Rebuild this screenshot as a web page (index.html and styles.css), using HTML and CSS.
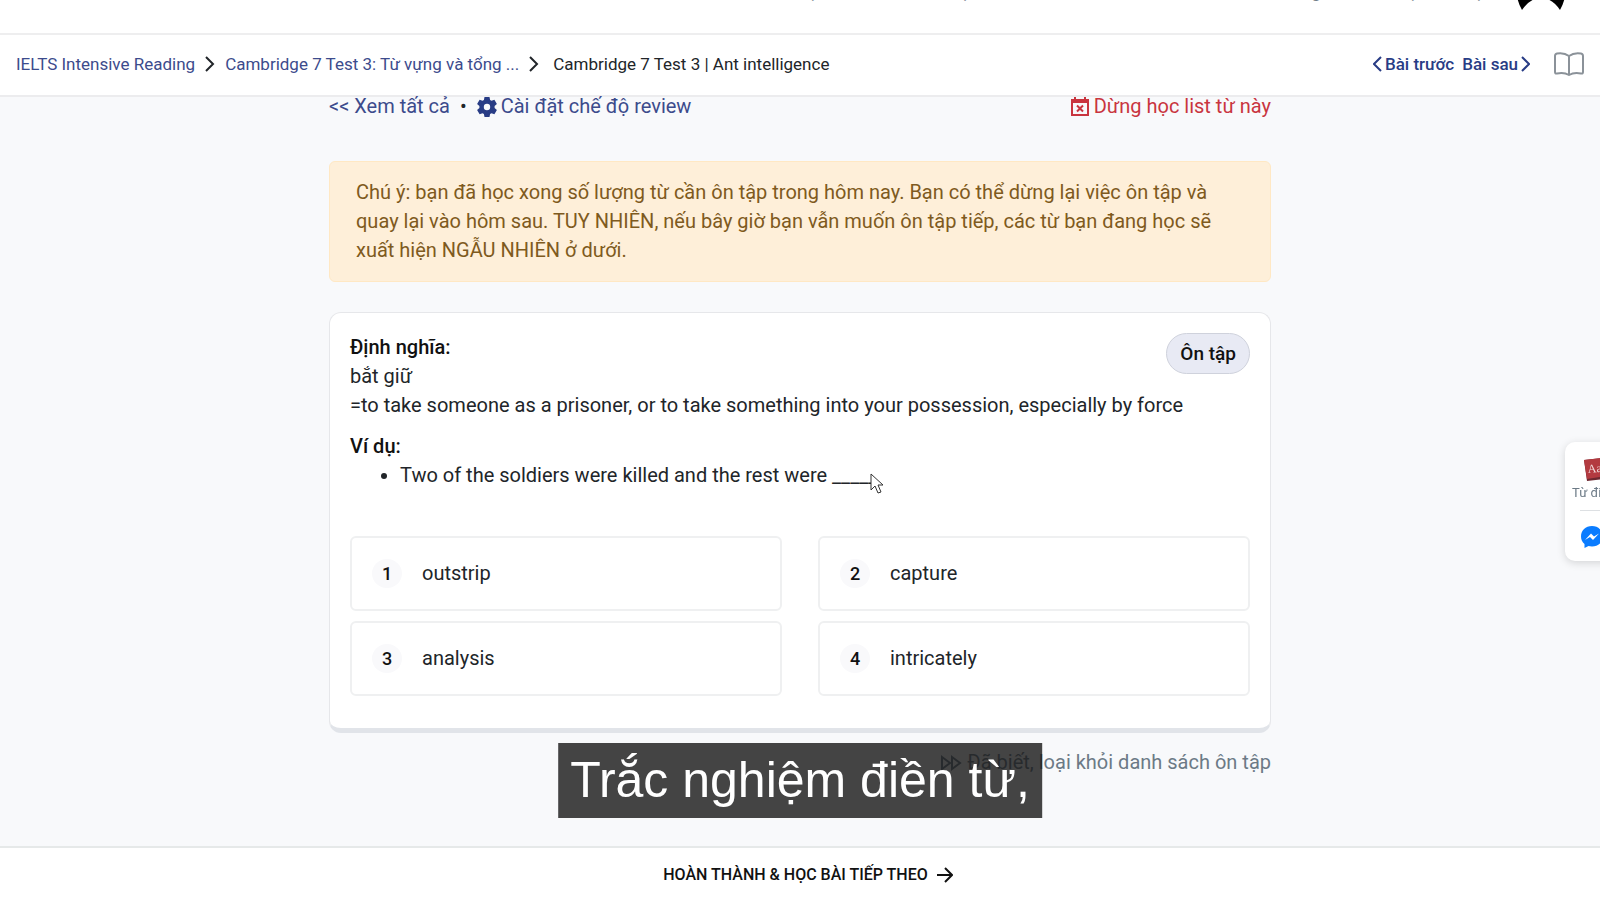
FILE: index.html
```html
<!DOCTYPE html>
<html lang="vi">
<head>
    <meta charset="UTF-8" />
    <meta name="viewport" content="width=device-width, initial-scale=1.0" />
    <title>Cambridge 7 Test 3 | Ant intelligence</title>
    <link rel="stylesheet" href="styles.css">
</head>
<body>
    <header class="site-header">
        <nav class="site-nav">
            <div class="nav-main">
                <a href="#">Khoá học</a>
                <a href="#">Bài học</a>
            </div>
            <div class="nav-user">
                <a href="#">Thông báo</a>
                <a href="#">Đã học</a>
                <a href="#">Từ lạ</a>
            </div>
        </nav>
        <svg class="avatar" viewBox="0 0 50 50" aria-hidden="true">
            <path d="M0 25h50q0 15-6 25-8-12-19-12T6 50Q0 40 0 25z"/>
        </svg>
    </header>

    <div class="topbar">
        <nav class="breadcrumb">
            <a href="#">IELTS Intensive Reading</a>
            <svg class="sep" viewBox="0 0 10 16"><path d="M1 1l7 7-7 7"/></svg>
            <a href="#">Cambridge 7 Test 3: Từ vựng và tổng ...</a>
            <svg class="sep" viewBox="0 0 10 16"><path d="M1 1l7 7-7 7"/></svg>
            <span class="current">Cambridge 7 Test 3 | Ant intelligence</span>
        </nav>
        <div class="lesson-nav">
            <a href="#"><svg class="chevron" viewBox="0 0 9 16"><path d="M8 1L1 8l7 7"/></svg>Bài trước</a>
            <a href="#">Bài sau<svg class="chevron" viewBox="0 0 9 16"><path d="M1 1l7 7-7 7"/></svg></a>
            <button class="book-button" aria-label="Mục lục">
                <svg viewBox="0 0 30 24"><path d="M15 4C11 1 6 1 3 1.500Q1 2 1 4v16q0 2 2 1.500Q10 20 15 23q5-3 12-1.500 2 .5 2-1.500V4q0-2-2-2.500C24 1 19 1 15 4zM15 4v19"/></svg>
            </button>
        </div>
    </div>

    <main class="container">
        <div class="toolbar">
            <div class="toolbar-left">
                <a href="#">&lt;&lt; Xem tất cả</a>
                <span class="dot">•</span>
                <a href="#">
                    <svg class="icon" viewBox="0 0 20 20"><path fill="currentColor" fill-rule="evenodd" d="M7.500 0h5l.6 3 1.400.8 2.900-1 2.500 4.300-2.300 2v1.800l2.300 2-2.500 4.300-2.900-1-1.400.8-.6 3h-5l-.6-3-1.400-.8-2.900 1L.1 12.900l2.300-2V9.100l-2.300-2 2.500-4.300 2.900 1L6.900 3zM10 6.800a3.200 3.200 0 100 6.400 3.200 3.200 0 000-6.400z"/></svg>
                    Cài đặt chế độ review
                </a>
            </div>
            <a class="danger" href="#">
                <svg class="icon" viewBox="0 0 20 20"><path fill="none" stroke="currentColor" stroke-width="2" d="M2 4h16v14H2zM7 8.500l6 6M13 8.500l-6 6"/><path fill="currentColor" d="M1 2h3V0h2v2h8V0h2v2h3v4H1z"/></svg>
                Dừng học list từ này
            </a>
        </div>

        <div class="alert">
            Chú ý: bạn đã học xong số lượng từ cần ôn tập trong hôm nay. Bạn có thể dừng lại việc ôn tập và quay lại vào hôm sau. TUY NHIÊN, nếu bây giờ bạn vẫn muốn ôn tập tiếp, các từ bạn đang học sẽ xuất hiện NGẪU NHIÊN ở dưới.
        </div>

        <section class="card">
            <span class="badge">Ôn tập</span>
            <div class="definition">
                <h3>Định nghĩa:</h3>
                <p>bắt giữ</p>
                <p>=to take someone as a prisoner, or to take something into your possession, especially by force</p>
            </div>
            <h3>Ví dụ:</h3>
            <ul class="examples">
                <li>Two of the soldiers were killed and the rest were <span class="blank">_____<svg class="cursor" viewBox="0 0 14 21"><path d="M1 1v16l4-4 3 7 3-1-3-7h5z"/></svg></span></li>
            </ul>
            <div class="answers">
                <button class="answer"><span class="number">1</span>outstrip</button>
                <button class="answer"><span class="number">2</span>capture</button>
                <button class="answer"><span class="number">3</span>analysis</button>
                <button class="answer"><span class="number">4</span>intricately</button>
            </div>
        </section>

        <a class="known" href="#">
            <svg class="forward" viewBox="0 0 22 16"><path d="M2 2l8 6-8 6zM12 2l8 6-8 6z"/></svg>
            Đã biết, loại khỏi danh sách ôn tập
        </a>
    </main>

    <footer class="footer">
        <button class="finish">
            HOÀN THÀNH &amp; HỌC BÀI TIẾP THEO
            <svg class="arrow" viewBox="0 0 16 16"><path d="M0 8h15M8 1l7 7-7 7"/></svg>
        </button>
    </footer>

    <aside class="side-widget">
        <a href="#">
            <svg class="dictionary" viewBox="0 0 30 24"><path fill="#6d2830" d="M1 3l27-3 2 21-26 3z"/><path fill="#b33a40" d="M1 3l26-3 2 18-25 4z"/><text x="5" y="16" transform="rotate(-5 5 16)">Aa</text></svg>
            Từ điển
        </a>
        <a href="#" aria-label="Messenger">
            <svg class="messenger" viewBox="0 0 24 24"><path fill="#0a7cff" d="M12 1C5.500 1 1 5.500 1 11.500c0 3 1.300 5.500 3.500 7.500V23l4-2c1 .3 2 .5 3.500.5 6.500 0 11-4.500 11-10S18.500 1 12 1z"/><path fill="#fff" d="M5 15l6-6.500 3 3 5-3-6 6.500-3-3z"/></svg>
        </a>
    </aside>

    <div class="caption">Trắc nghiệm điền từ,</div>
</body>
</html>
```
FILE: styles.css
```css
:root {
    --bg: #f8f9fb;
    --border: #e6e7ea;
    --link: #3c4b8c;
    --link-strong: #283c85;
    --danger: #c9353f;
    --muted: #6c7a86;
}

* {
    margin: 0;
    padding: 0;
    box-sizing: border-box;
}

body {
    min-height: 100vh;
    display: flex;
    flex-direction: column;
    font-family: Roboto, sans-serif;
    font-size: 20px;
    line-height: 29px;
    color: #212529;
    background: var(--bg);
    overflow: hidden;
}

a {
    color: var(--link);
    text-decoration: none;
}

button {
    font: inherit;
    color: inherit;
    background: none;
    border: none;
    cursor: pointer;
}

svg {
    flex: none;
}

/* header is scrolled almost out of view */
.site-header {
    height: 35px;
    display: flex;
    align-items: flex-end;
    justify-content: flex-end;
    gap: 32px;
    padding: 0 34px 23px 0;
    background: #fff;
    border-bottom: 2px solid #eeeeef;
}

.site-nav {
    display: flex;
    gap: 294px;
    padding-bottom: 6px;
    font-size: 17px;
    line-height: 24px;
    white-space: nowrap;
}

.nav-main,
.nav-user {
    display: flex;
    gap: 20px;
}

.nav-main {
    gap: 96px;
}

.site-nav a {
    color: var(--muted);
}

.avatar {
    width: 50px;
    height: 50px;
}

.topbar {
    display: flex;
    align-items: center;
    justify-content: space-between;
    height: 62px;
    padding: 0 16px 2px;
    background: #fff;
    border-bottom: 2px solid #ececee;
    font-size: 17px;
}

.breadcrumb,
.lesson-nav,
.lesson-nav a {
    display: flex;
    align-items: center;
}

.breadcrumb {
    gap: 10px;
}

.sep {
    width: 10px;
    height: 16px;
    fill: none;
    stroke: #212529;
    stroke-width: 2;
}

.current {
    margin-left: 4px;
}

.lesson-nav {
    gap: 8px;
}

.lesson-nav a {
    gap: 3px;
    color: var(--link-strong);
    font-weight: 500;
}

.chevron {
    width: 9px;
    height: 16px;
    fill: none;
    stroke: currentColor;
    stroke-width: 2;
}

.book-button {
    display: flex;
    margin-left: 16px;
}

.book-button svg {
    width: 30px;
    height: 24px;
    fill: none;
    stroke: #8b9299;
    stroke-width: 2;
}

.container {
    flex: 1;
    width: 100%;
    max-width: 942px;
    margin: 0 auto;
    display: flex;
    flex-direction: column;
}

.toolbar {
    display: flex;
    justify-content: space-between;
    margin: -5px 0 40px;
}

.toolbar-left {
    display: flex;
    gap: 10px;
}

.dot {
    color: #212529;
}

.toolbar a {
    display: flex;
    align-items: center;
    gap: 4px;
}

.toolbar .icon {
    width: 20px;
    height: 20px;
    color: var(--link-strong);
}

.toolbar .danger,
.toolbar .danger .icon {
    color: var(--danger);
}

.alert {
    padding: 16px 26px;
    border: 1px solid #ffe8c4;
    border-radius: 6px;
    background: #feefd9;
    color: #7e5a20;
}

.card {
    position: relative;
    margin: 30px 0 15px;
    padding: 20px;
    border: 1px solid var(--border);
    border-bottom: 5px solid #e1e4e9;
    border-radius: 12px;
    background: #fff;
}

.card h3 {
    font-size: 20px;
    font-weight: 500;
    color: #111;
}

.definition {
    margin-bottom: 12px;
}

.badge {
    position: absolute;
    top: 20px;
    right: 20px;
    padding: 5px 13px;
    border: 1px solid #cfd2dc;
    border-radius: 21px;
    background: #e8eaf4;
    color: #111;
    font-size: 19px;
    font-weight: 500;
}

.examples {
    padding-left: 50px;
    margin-bottom: 46px;
}

.blank {
    position: relative;
}

/* mouse pointer over the blank */
.cursor {
    position: absolute;
    left: 38px;
    top: 10px;
    width: 14px;
    height: 21px;
    fill: #fff;
    stroke: #333;
}

.answers {
    display: grid;
    grid-template-columns: 1fr 1fr;
    gap: 10px 36px;
    margin-bottom: 12px;
}

.answer {
    display: flex;
    align-items: center;
    gap: 20px;
    padding: 21px 20px;
    border: 2px solid #eff0f1;
    border-radius: 6px;
    text-align: left;
}

.number {
    width: 30px;
    border-radius: 50%;
    background: #f9f9fb;
    color: #111;
    font-size: 18px;
    font-weight: 500;
    text-align: center;
}

.known {
    display: flex;
    align-items: center;
    align-self: flex-end;
    gap: 5px;
    color: var(--muted);
}

.forward {
    width: 22px;
    height: 16px;
    fill: none;
    stroke: currentColor;
    stroke-width: 2;
}

.footer {
    display: flex;
    justify-content: center;
    padding: 12px 0 8px 16px;
    border-top: 2px solid #e6e9e9;
    background: #fff;
}

.finish {
    display: flex;
    align-items: center;
    gap: 9px;
    font-size: 16px;
    line-height: 29px;
    font-weight: 500;
    color: #111;
}

.arrow {
    width: 16px;
    height: 16px;
    fill: none;
    stroke: currentColor;
    stroke-width: 2;
}

.side-widget {
    position: fixed;
    top: 442px;
    right: -20px;
    width: 55px;
    padding: 15px 7px 12px;
    border-radius: 10px;
    background: #fff;
    box-shadow: 0 2px 8px rgba(0, 0, 0, 0.15);
    font-size: 13px;
    line-height: 24px;
    white-space: nowrap;
}

.side-widget a {
    display: flex;
    flex-direction: column;
    color: var(--muted);
}

.side-widget a + a {
    margin: 5px 0 0 8px;
    padding: 14px 0 0;
    border-top: 1px solid #dde0e3;
}

.dictionary {
    width: 30px;
    height: 24px;
    margin-left: 11px;
}

.dictionary text {
    font: 12px "Liberation Serif", serif;
    fill: #f0d9d9;
}

.messenger {
    width: 24px;
    height: 24px;
}

.caption {
    position: fixed;
    left: 50%;
    bottom: 79px;
    transform: translateX(-50%);
    padding: 0 12px;
    background: rgba(22, 22, 22, 0.8);
    color: #fff;
    font-family: "Liberation Sans", Arial, sans-serif;
    font-size: 50px;
    line-height: 75px;
    white-space: nowrap;
}
```
